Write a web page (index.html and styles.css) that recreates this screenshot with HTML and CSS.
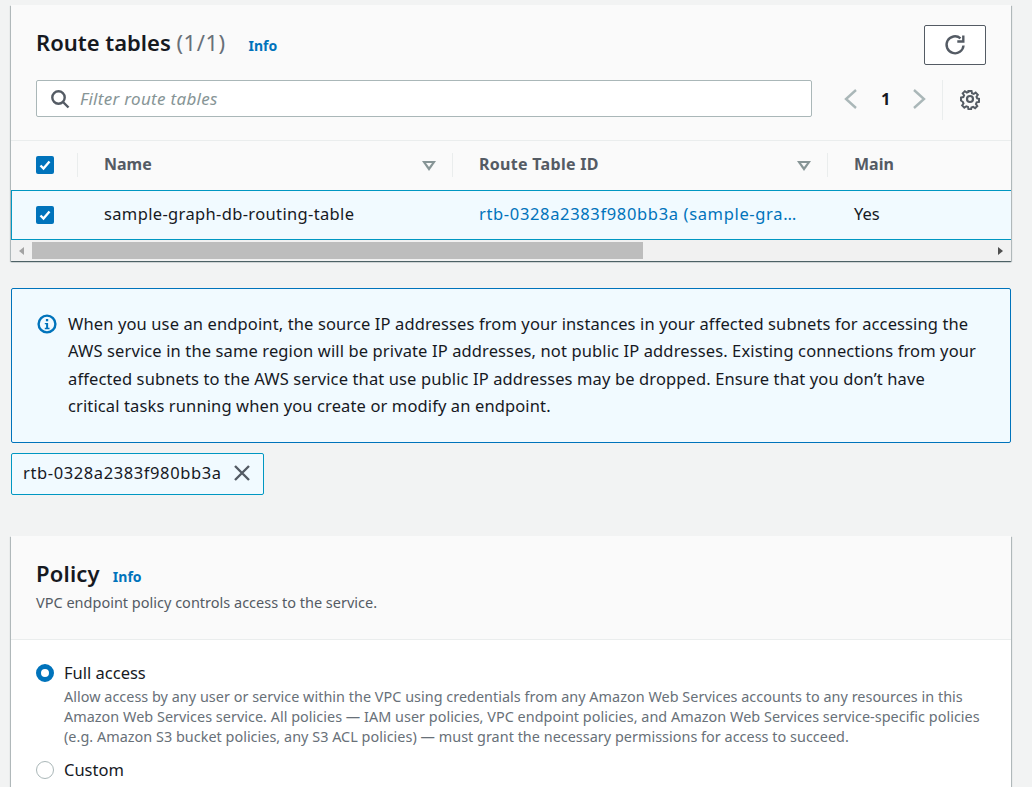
FILE: index.html
```html
<!DOCTYPE html>
<html>
<head>
  <title>Route tables</title>
  <link rel="stylesheet" href="styles.css">
</head>
<body>

<div class="card">
  <div class="tableHeader">
    <div class="titleRow">
      <h2 class="title">Route tables <span class="count">(1/1)</span></h2>
      <a class="info infoFar">Info</a>
      <button class="refresh">
        <svg width="24" height="24" viewBox="0 0 24 24" fill="none" stroke="#545b64" stroke-width="2.4">
          <path d="M20.5 12.500a8.500 8.500 0 1 1-3-7.200"/>
          <path d="M20.300 2.500v6h-6"/>
        </svg>
      </button>
    </div>
    <div class="filterRow">
      <div class="filter">
        <svg width="20" height="20" viewBox="0 0 20 20" fill="none" stroke="#545b64" stroke-width="2.400">
          <circle cx="8.500" cy="8.500" r="6.200"/>
          <path d="M13 13l5.500 5.500"/>
        </svg>
        <span class="placeholder">Filter route tables</span>
      </div>
      <div class="pager">
        <svg width="16" height="22" viewBox="0 0 16 22" fill="none" stroke="#aab7b8" stroke-width="2.400"><path d="M13 2L3 11l10 9"/></svg>
        <span class="pageNum">1</span>
        <svg width="16" height="22" viewBox="0 0 16 22" fill="none" stroke="#aab7b8" stroke-width="2.400"><path d="M3 2l10 9-10 9"/></svg>
      </div>
      <div class="settings">
        <svg width="22" height="22" viewBox="0 0 22 22" fill="none" stroke="#545b64" stroke-width="2.200">
          <circle cx="11" cy="11" r="3"/>
          <path d="M9.300 2h3.400l.5 2.600 1.900.8 2.200-1.500 2.400 2.400-1.500 2.200.8 1.900 2 .4v3.400l-2.600.5-.8 1.900 1.500 2.200-2.400 2.400-2.200-1.500-1.900.8-.4 2H9.300l-.5-2.600-1.900-.8-2.200 1.500-2.400-2.400 1.500-2.200-.8-1.900L1 12.700V9.300l2.600-.5.8-1.900-1.500-2.200 2.400-2.400 2.200 1.500 1.900-.8z" transform="translate(1.100 1.100) scale(.9)"/>
        </svg>
      </div>
    </div>
  </div>

  <div class="row headRow">
    <div class="cell checkCell"><span class="checkbox"><svg width="12" height="12" viewBox="0 0 12 12" fill="none" stroke="#fff" stroke-width="2.400"><path d="M1.500 6.500l3 3 6-7"/></svg></span></div>
    <div class="cell nameCell"><span>Name</span><span class="sortIcon"></span></div>
    <div class="cell idCell"><span class="idHead">Route Table ID</span><span class="sortIcon"></span></div>
    <div class="cell mainCell">Main</div>
  </div>
  <div class="row bodyRow">
    <div class="cell checkCell"><span class="checkbox"><svg width="12" height="12" viewBox="0 0 12 12" fill="none" stroke="#fff" stroke-width="2.400"><path d="M1.500 6.500l3 3 6-7"/></svg></span></div>
    <div class="cell nameCell">sample-graph-db-routing-table</div>
    <div class="cell idCell"><a class="idLink">rtb-0328a2383f980bb3a (sample-gra…</a></div>
    <div class="cell mainCell">Yes</div>
  </div>
  <div class="scrollbar">
    <span class="arrowLeft"></span>
    <div class="thumb"></div>
    <span class="arrowRight"></span>
  </div>
</div>

<div class="alert">
  <svg class="alertIcon" width="20" height="20" viewBox="0 0 20 20">
    <circle cx="10" cy="10" r="8.400" fill="none" stroke="#0073bb" stroke-width="2.400"/>
    <rect x="8.900" y="5" width="2.300" height="2.300" fill="#0073bb"/>
    <path d="M7.800 9h3.300v4.800h1.400v1.400H7.800v-1.400h1.300V10.300H7.800z" fill="#0073bb"/>
  </svg>
  <p>When you use an endpoint, the source IP addresses from your instances in your affected subnets for accessing the AWS service in the same region will be private IP addresses, not public IP addresses. Existing connections from your affected subnets to the AWS service that use public IP addresses may be dropped. Ensure that you don’t have critical tasks running when you create or modify an endpoint.</p>
</div>

<div class="token">
  <span class="tokenText">rtb-0328a2383f980bb3a</span>
  <svg width="18" height="18" viewBox="0 0 18 18" fill="none" stroke="#545b64" stroke-width="2.400"><path d="M2 2l14 14M16 2L2 16"/></svg>
</div>

<div class="card policyCard">
  <div class="policyHeader">
    <div class="policyTitle">
      <h2 class="title">Policy</h2>
      <a class="info">Info</a>
    </div>
    <div class="policyDesc">VPC endpoint policy controls access to the service.</div>
  </div>
  <div class="policyBody">
    <div class="radioRow">
      <span class="radio radioOn"></span>
      <div>
        <div class="radioLabel">Full access</div>
        <div class="radioDesc">Allow access by any user or service within the VPC using credentials from any Amazon Web Services accounts to any resources in this Amazon Web Services service. All policies — IAM user policies, VPC endpoint policies, and Amazon Web Services service-specific policies (e.g. Amazon S3 bucket policies, any S3 ACL policies) — must grant the necessary permissions for access to succeed.</div>
      </div>
    </div>
    <div class="radioRow customRow">
      <span class="radio"></span>
      <div class="radioLabel">Custom</div>
    </div>
  </div>
</div>

</body>
</html>
```

FILE: styles.css
```css
html, body {
  height: 787px;
  overflow: hidden;
}

body {
  margin: 0;
  padding: 5px 21px 0 11px;
  background: #f2f3f3;
  color: #16191f;
  font-family: "Noto Sans", sans-serif;
  font-size: 16.5px;
}

.card {
  background: #fff;
  box-shadow: 0 1px 1px 0 rgba(0, 28, 36, 0.5), 1px 1px 1px 0 rgba(0, 28, 36, 0.2), -1px 1px 1px 0 rgba(0, 28, 36, 0.2);
}

.tableHeader {
  height: 136px;
  box-sizing: border-box;
  padding: 20px 25px 0;
  background: #fafafa;
  border-bottom: 1px solid #eaeded;
}

.titleRow {
  display: flex;
  align-items: flex-start;
  height: 55px;
}

.title {
  margin: 0;
  font-size: 22px;
  font-weight: 600;
  line-height: 34px;
}

.policyTitle .title {
  letter-spacing: 0.2px;
}

.count {
  font-weight: 400;
  color: #687078;
  letter-spacing: 0.5px;
}

.info {
  color: #0073bb;
  font-size: 14px;
  font-weight: 700;
}

.infoFar {
  margin-left: 23px;
  line-height: 42px;
}

.refresh {
  margin-left: auto;
  width: 62px;
  height: 40px;
  background: #fff;
  border: 1px solid #545b64;
  border-radius: 2px;
  display: flex;
  align-items: center;
  justify-content: center;
  padding: 0;
}

.filterRow {
  display: flex;
  align-items: flex-start;
}

.filter {
  width: 776px;
  height: 37px;
  box-sizing: border-box;
  background: #fff;
  border: 1px solid #aab7b8;
  border-radius: 2px;
  display: flex;
  align-items: center;
  padding-left: 13px;
  gap: 10px;
}

.placeholder {
  color: #879596;
  font-size: 17px;
  font-style: italic;
  letter-spacing: 0.3px;
}

.pager {
  margin-left: 31px;
  width: 100px;
  height: 40px;
  box-sizing: border-box;
  padding-bottom: 2px;
  display: flex;
  align-items: center;
  gap: 22px;
  border-right: 1px solid #eaeded;
}

.pageNum {
  font-weight: 700;
  width: 8px;
  margin-bottom: 2px;
}

.settings {
  margin-left: 16px;
  height: 38px;
  display: flex;
  align-items: center;
}

.row {
  display: flex;
  align-items: center;
}

.headRow {
  height: 49px;
  box-sizing: border-box;
  padding-bottom: 1px;
  background: #fafafa;
  color: #545b64;
  font-size: 16px;
  font-weight: 700;
}

.idHead {
  letter-spacing: 0.3px;
}

.bodyRow {
  height: 50px;
  box-sizing: border-box;
  background: #f1faff;
  border: 1px solid #0097c2;
  border-right: 0;
}

.cell {
  display: flex;
  align-items: center;
  box-sizing: border-box;
  height: 24px;
  white-space: nowrap;
}

.checkCell {
  width: 67px;
  padding-left: 25px;
}

.bodyRow .checkCell {
  width: 66px;
  padding-left: 24px;
}

.headRow .checkCell,
.headRow .nameCell,
.headRow .idCell {
  border-right: 1px solid #eaeded;
}

.nameCell,
.idCell {
  width: 375px;
  padding: 0 16px 2px 26px;
  justify-content: space-between;
}

.mainCell {
  padding: 0 0 2px 26px;
}

.bodyRow .nameCell,
.bodyRow .idCell,
.bodyRow .mainCell {
  padding-bottom: 3px;
}

.bodyRow .nameCell {
  letter-spacing: 0.35px;
}

.idLink {
  color: #0073bb;
  letter-spacing: 0.65px;
}

.checkbox {
  width: 18px;
  height: 18px;
  background: #0073bb;
  border-radius: 2px;
  display: flex;
  align-items: center;
  justify-content: center;
}

.sortIcon {
  width: 0;
  height: 0;
  margin-top: 3px;
  border-left: 7px solid transparent;
  border-right: 7px solid transparent;
  border-top: 10px solid #879596;
  position: relative;
}

.sortIcon::after {
  content: "";
  position: absolute;
  left: -3px;
  top: -8px;
  border-left: 3px solid transparent;
  border-right: 3px solid transparent;
  border-top: 4px solid #fafafa;
}

.scrollbar {
  height: 21px;
  background: #f1f1f1;
  display: flex;
  align-items: center;
}

.arrowLeft {
  width: 0;
  height: 0;
  margin-left: 8px;
  border-top: 4.500px solid transparent;
  border-bottom: 4.500px solid transparent;
  border-right: 5px solid #a3a3a3;
}

.thumb {
  width: 611px;
  height: 17px;
  margin-left: 8px;
  background: #bdbdbd;
}

.arrowRight {
  width: 0;
  height: 0;
  margin-left: auto;
  margin-right: 8px;
  border-top: 4.500px solid transparent;
  border-bottom: 4.500px solid transparent;
  border-left: 5px solid #505050;
}

.alert {
  margin-top: 27px;
  height: 155px;
  box-sizing: border-box;
  display: flex;
  gap: 11px;
  padding: 21px 30px 0 25px;
  background: #f1faff;
  border: 1px solid #0073bb;
  border-radius: 2px;
}

.alertIcon {
  flex: none;
  margin-top: 4px;
}

.alert p {
  margin: 0;
  line-height: 27.400px;
  letter-spacing: 0.12px;
}

.token {
  margin-top: 10px;
  width: 253px;
  height: 42px;
  box-sizing: border-box;
  display: flex;
  align-items: center;
  gap: 11px;
  padding: 0 0 2px 11px;
  background: #f1faff;
  border: 1px solid #0097c2;
  border-radius: 2px;
  letter-spacing: 0.6px;
}

.tokenText {
  margin-bottom: 2px;
}

.policyCard {
  margin-top: 41px;
  height: 260px;
}

.policyHeader {
  height: 104px;
  box-sizing: border-box;
  padding: 20px 25px 0;
  background: #fafafa;
  border-bottom: 1px solid #eaeded;
}

.policyTitle {
  display: flex;
  align-items: baseline;
  gap: 13px;
}

.policyDesc {
  font-size: 14.500px;
  color: #545b64;
  line-height: 20px;
  margin-top: 2px;
}

.policyBody {
  padding: 20px 25px 0;
}

.radioRow {
  display: flex;
  align-items: flex-start;
  gap: 10px;
}

.customRow {
  margin-top: 10px;
}

.radio {
  flex: none;
  width: 18px;
  height: 18px;
  margin-top: 4px;
  box-sizing: border-box;
  border: 1.500px solid #aab7b8;
  border-radius: 50%;
  background: #fff;
}

.radioOn {
  border: 5px solid #0073bb;
}

.radioLabel {
  line-height: 26px;
}

.radioDesc {
  font-size: 14.400px;
  line-height: 20px;
  margin-top: 1px;
  letter-spacing: 0.03px;
  color: #687078;
}
```
